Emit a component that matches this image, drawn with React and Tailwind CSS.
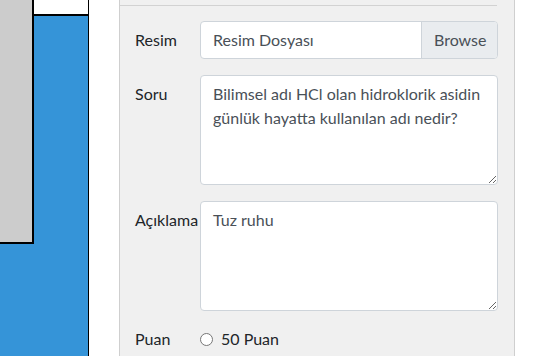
import React from 'react';

const font = { fontFamily: 'Lato, "Noto Sans", sans-serif' };

const FormRow = ({ label, children, labelClass = 'pt-[7px]' }) => (
    <div className="flex mb-4">
        <label className={`w-[65px] shrink-0 text-[16px] leading-6 text-[#212529] ${labelClass}`}>{label}</label>
        <div className="flex-1">{children}</div>
    </div>
);

const App = () => {
    return (
        <div className="flex h-[356px] w-[559px] overflow-hidden bg-white" style={font}>
            {/* left canvas */}
            <div className="w-[89px] shrink-0 bg-[#3594d8] border-r border-black flex flex-col">
                <div className="flex">
                    <div className="w-[34px] h-[244px] bg-[#cccccc] border-r-2 border-b-2 border-black" />
                    <div className="flex-1 h-[16px] bg-white border-b-2 border-black" />
                </div>
            </div>

            <div className="w-[30px] shrink-0 bg-white" />

            {/* form panel */}
            <div className="w-[396px] shrink-0 bg-[#f0f0f0] border-l border-r border-[#cfcfcf]">
                <div className="h-[5px]" />
                <div className="mr-[17px] border-t border-[#d2d2d2]" />
                <div className="pl-[15px] pr-[16px] pt-[15px]">
                    <FormRow label="Resim">
                        <div className="flex h-[38px] rounded border border-[#ced4da] bg-white overflow-hidden">
                            <span className="flex-1 px-3 py-[6px] text-[16px] leading-6 text-[#495057]">Resim Dosyası</span>
                            <span className="w-[76px] border-l border-[#ced4da] bg-[#e9ecef] px-3 py-[6px] text-[16px] leading-6 text-[#495057]">Browse</span>
                        </div>
                    </FormRow>
                    <FormRow label="Soru">
                        <textarea
                            rows={4}
                            readOnly
                            className="block w-full h-[110px] rounded border border-[#ced4da] bg-white px-3 py-[6px] text-[16px] leading-6 text-[#495057] outline-none"
                            style={font}
                            value="Bilimsel adı HCl olan hidroklorik asidin günlük hayatta kullanılan adı nedir?"
                        />
                    </FormRow>
                    <FormRow label="Açıklama">
                        <textarea
                            rows={4}
                            readOnly
                            className="block w-full h-[110px] rounded border border-[#ced4da] bg-white px-3 py-[6px] text-[16px] leading-6 text-[#495057] outline-none"
                            style={font}
                            value="Tuz ruhu"
                        />
                    </FormRow>
                    <div className="flex items-center h-6">
                        <span className="w-[65px] text-[16px] leading-6 text-[#212529]">Puan</span>
                        <span className="w-[13px] h-[13px] rounded-full border border-[#767676] bg-white" />
                        <span className="ml-2 text-[16px] leading-6 text-[#212529]">50 Puan</span>
                    </div>
                </div>
            </div>

            <div className="flex-1 bg-white" />
        </div>
    );
};

export default App;
